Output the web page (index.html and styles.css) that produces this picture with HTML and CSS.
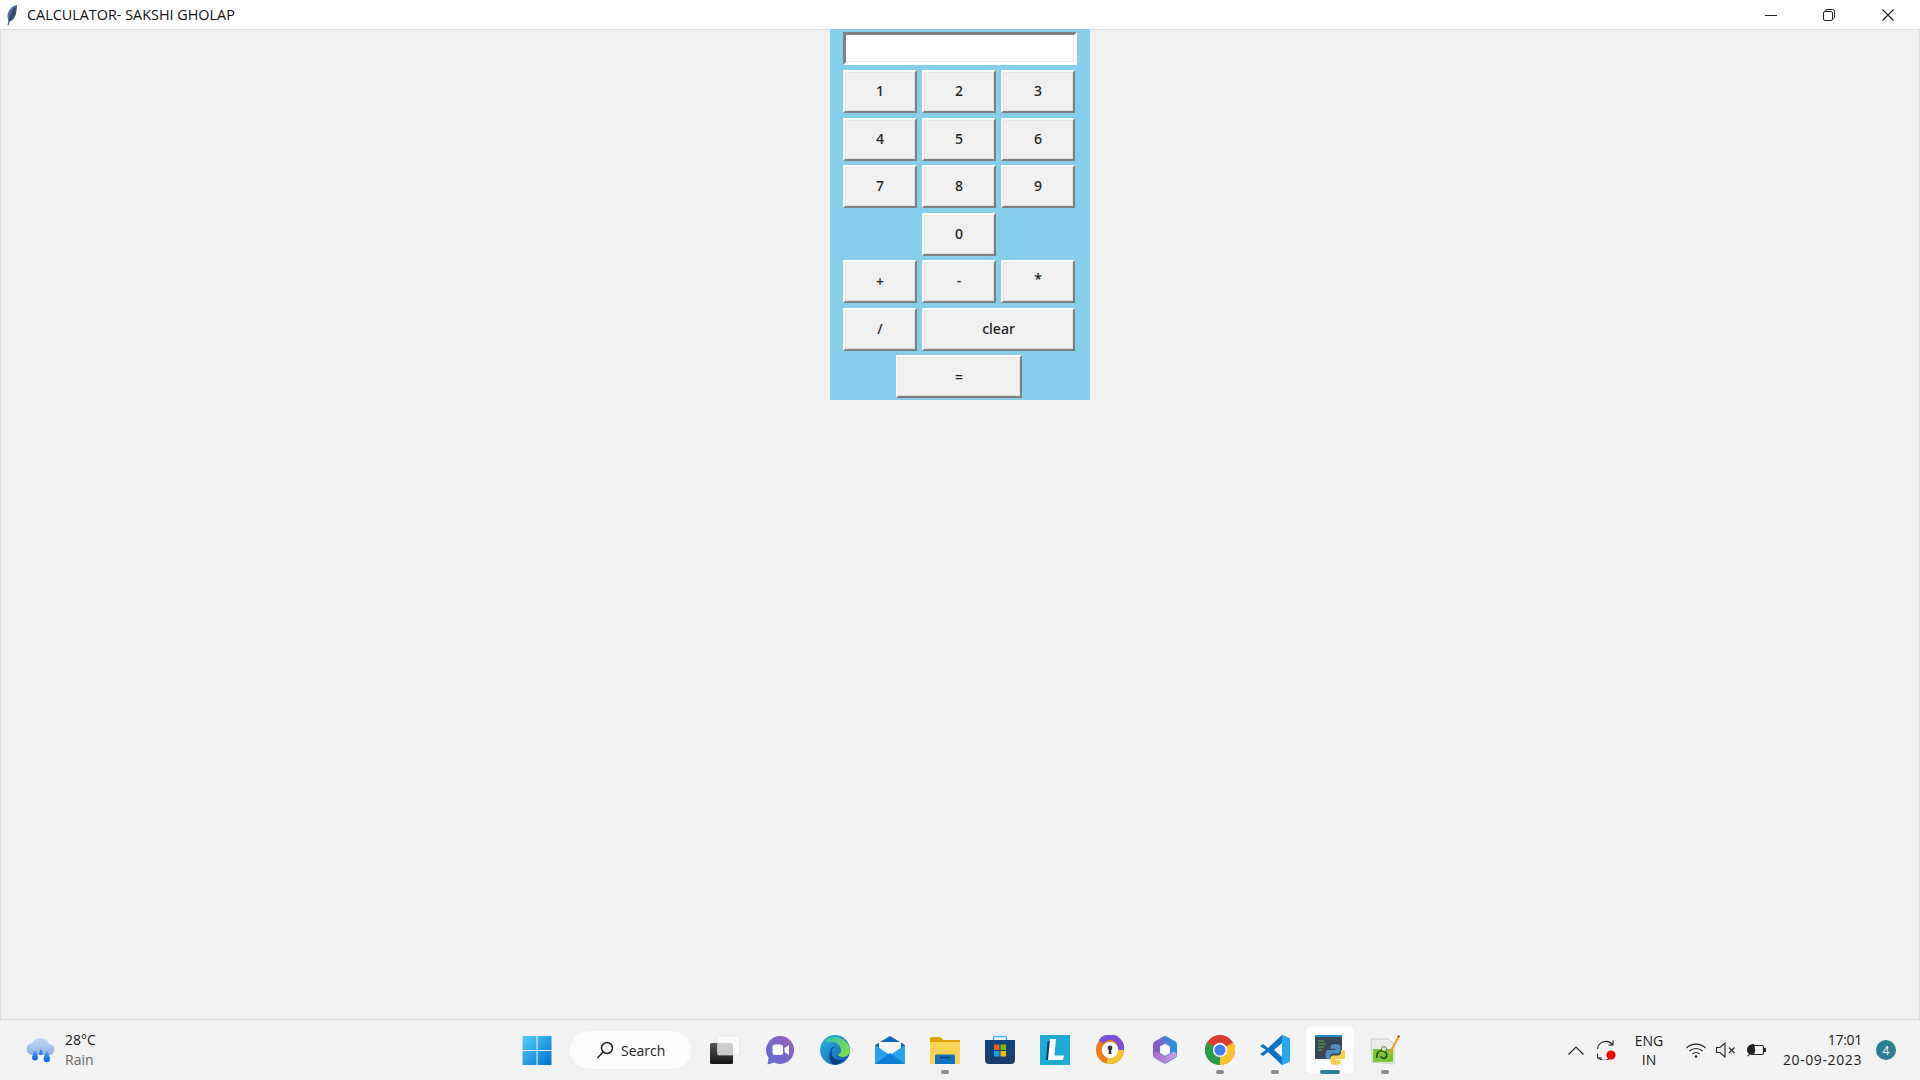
FILE: index.html
```html
<!DOCTYPE html>
<html lang="en">
<head>
    <meta charset="UTF-8">
    <title>CALCULATOR- SAKSHI GHOLAP</title>
    <link rel="stylesheet" href="styles.css">
</head>
<body>
    <header class="titlebar">
        <svg class="feather" width="12" height="22" viewBox="0 0 12 22">
            <defs><linearGradient id="fe" x1="0" y1="0" x2="1" y2="1"><stop offset="0" stop-color="#6c95c6"/><stop offset="1" stop-color="#16233f"/></linearGradient></defs>
            <path d="M11 1C6 2 2 6 1.5 11c-.2 2 .2 4 1 5.5L1.5 21l1 .5 1.2-4c3-1 5.5-4 6.300-8C10.500 6.500 11 4 11 1z" fill="url(#fe)"/>
            <path d="M9 4L3 17" stroke="#0d1526" stroke-width=".7"/>
        </svg>
        <span class="title-text">CALCULATOR- SAKSHI GHOLAP</span>
        <div class="win-controls">
            <div class="win-btn"><svg width="12" height="12" viewBox="0 0 12 12"><path d="M0 6.5h12" stroke="#222" stroke-width="1"/></svg></div>
            <div class="win-btn"><svg width="12" height="12" viewBox="0 0 12 12" fill="none" stroke="#222"><rect x=".5" y="2.5" width="9" height="9" rx="1.5"/><path d="M2.5 2.500V2A1.500 1.500 0 0 1 4 .5h5.500A2 2 0 0 1 11.500 2.500V8A1.500 1.500 0 0 1 9.500 9.500"/></svg></div>
            <div class="win-btn"><svg width="12" height="12" viewBox="0 0 12 12"><path d="M.5.5l11 11M11.5.5l-11 11" stroke="#222" stroke-width="1.1"/></svg></div>
        </div>
    </header>

    <main class="app-area">
        <div class="calc">
            <div class="entry"></div>
            <div class="keys">
                <button class="key">1</button>
                <button class="key">2</button>
                <button class="key">3</button>
                <button class="key">4</button>
                <button class="key">5</button>
                <button class="key">6</button>
                <button class="key">7</button>
                <button class="key">8</button>
                <button class="key">9</button>
                <button class="key key-zero">0</button>
                <button class="key key-plus">+</button>
                <button class="key">-</button>
                <button class="key key-star">*</button>
                <button class="key">/</button>
                <button class="key key-clear">clear</button>
                <button class="key key-equals">=</button>
            </div>
        </div>
    </main>

    <footer class="taskbar">
        <div class="weather">
            <svg width="30" height="28" viewBox="0 0 30 28">
                <defs>
                    <linearGradient id="cl" x1="0" y1="0" x2="0" y2="1"><stop offset="0" stop-color="#c5d9f5"/><stop offset="1" stop-color="#8fb2e6"/></linearGradient>
                    <linearGradient id="dr" x1="0" y1="0" x2="0" y2="1"><stop offset="0" stop-color="#4aa3ff"/><stop offset="1" stop-color="#0f62e8"/></linearGradient>
                </defs>
                <path d="M7 19a6 6 0 0 1-1-12 9 8 0 0 1 17 1 5.5 5.5 0 0 1 0 11z" fill="url(#cl)"/>
                <path d="M9 14c1.500 3 3 5 3 7.500a3 3 0 0 1-6 0C6 19 8 17 9 14z" fill="url(#dr)"/>
                <path d="M21 15c1.500 3 3 5.500 3 8a3.200 3.200 0 0 1-6.400 0c0-2.500 2-5 3.400-8z" fill="url(#dr)"/>
                <path d="M15 13c.8 2 1.600 3 1.600 4.500a1.700 1.700 0 0 1-3.400 0c0-1.500 1-2.500 1.800-4.500z" fill="#2f7ff0"/>
            </svg>
            <div class="weather-text">
                <span class="temp">28°C</span>
                <span class="cond">Rain</span>
            </div>
        </div>

        <div class="apps">
            <div class="cell">
                <svg width="30" height="30" viewBox="0 0 30 30">
                    <defs><linearGradient id="st" x1="0" y1="0" x2="1" y2="1"><stop offset="0" stop-color="#55d0fa"/><stop offset="1" stop-color="#0070cf"/></linearGradient></defs>
                    <path d="M.5 1h14v14H.5zM15.500 1h14v14h-14zM.5 16h14v14H.5zM15.500 16h14v14h-14z" fill="url(#st)"/>
                </svg>
            </div>
            <div class="search">
                <svg width="18" height="18" viewBox="0 0 18 18" fill="none" stroke="#222" stroke-width="1.5"><circle cx="11" cy="7" r="5.5"/><path d="M7 11l-5.500 6"/></svg>
                <span>Search</span>
            </div>
            <div class="cell">
                <svg width="30" height="30" viewBox="0 0 30 30">
                    <defs><linearGradient id="tv" x1="0" y1="0" x2="0" y2="1"><stop offset="0" stop-color="#555"/><stop offset="1" stop-color="#161616"/></linearGradient></defs>
                    <rect x="0" y="8" width="23" height="21" rx="1.5" fill="url(#tv)"/>
                    <rect x="7.5" y="1" width="22" height="19" rx="1.5" fill="#fff" fill-opacity=".72" stroke="#e2e2e2" stroke-width=".6"/>
                </svg>
            </div>
            <div class="cell">
                <svg width="30" height="30" viewBox="0 0 30 30">
                    <defs><linearGradient id="ch" x1="0" y1="1" x2="1" y2="0"><stop offset="0" stop-color="#5d6fd6"/><stop offset="1" stop-color="#9a5fb8"/></linearGradient></defs>
                    <path d="M15 1a14 14 0 1 1-6 26.600L2.500 29.500 3.600 23A14 14 0 0 1 15 1z" fill="url(#ch)"/>
                    <rect x="7.5" y="9.5" width="10.5" height="10.5" rx="2.5" fill="#fff"/>
                    <path d="M19.5 13l4.500-3v10l-4.500-3z" fill="#fff"/>
                </svg>
            </div>
            <div class="cell">
                <svg width="30" height="30" viewBox="0 0 30 30">
                    <defs>
                        <linearGradient id="e1" x1="0" y1="0" x2="1" y2="1"><stop offset="0" stop-color="#2fb9e6"/><stop offset="1" stop-color="#0b55a8"/></linearGradient>
                        <linearGradient id="e2" x1="0" y1="0" x2="1" y2=".7"><stop offset="0" stop-color="#31c3b0"/><stop offset="1" stop-color="#7ee04f"/></linearGradient>
                    </defs>
                    <circle cx="15" cy="15" r="15" fill="url(#e1)"/>
                    <path d="M5 6A15 15 0 0 1 30 15c0 4-3 7-7 7-3 0-5-1-5-2.500 2-1 3-2.500 3-4.500 0-4-4-8-9-8-3 0-6 1-7-1z" fill="url(#e2)"/>
                    <path d="M11 15c0-2 2-4 5-3-4 0-6 5-3.500 9.500 2 3 6.500 4.500 11.500 3A15 15 0 0 1 15 30C8 28 9 18 11 15z" fill="#0d3f88"/>
                </svg>
            </div>
            <div class="cell">
                <svg width="30" height="30" viewBox="0 0 30 30">
                    <path d="M15 1L30 10v3H0v-3z" fill="#0f67b8"/>
                    <path d="M4 7h22v14H4z" fill="#f4f4f4"/>
                    <path d="M0 10l15 10 15-10v19H0z" fill="#2aa3ea"/>
                    <path d="M0 29l15-11 15 11z" fill="#0f7fd2"/>
                </svg>
            </div>
            <div class="cell">
                <svg width="30" height="30" viewBox="0 0 30 30">
                    <path d="M0 3.500A1.500 1.500 0 0 1 1.500 2h9l3 3H29a1 1 0 0 1 1 1v4H0z" fill="#e0a106"/>
                    <path d="M0 7h30v21a1 1 0 0 1-1 1H1a1 1 0 0 1-1-1z" fill="#fcd354"/>
                    <path d="M5 29v-8a1.500 1.500 0 0 1 1.500-1.500h17A1.500 1.500 0 0 1 25 21v8z" fill="#0f72c4"/>
                    <path d="M10 22.500h10" stroke="#063b73" stroke-width="1.4"/>
                </svg>
                <i class="dot"></i>
            </div>
            <div class="cell">
                <svg width="30" height="30" viewBox="0 0 30 30">
                    <defs><linearGradient id="sb" x1="0" y1="0" x2="0" y2="1"><stop offset="0" stop-color="#11457e"/><stop offset="1" stop-color="#1c3a66"/></linearGradient></defs>
                    <path d="M8.5 5V2.500a1 1 0 0 1 1-1h11a1 1 0 0 1 1 1V5" fill="none" stroke="#35b8f2" stroke-width="1.4"/>
                    <path d="M0 5h30v20a4 4 0 0 1-4 4H4a4 4 0 0 1-4-4z" fill="url(#sb)"/>
                    <rect x="9" y="9.5" width="5.5" height="5.5" fill="#f05a28"/>
                    <rect x="15.5" y="9.5" width="5.5" height="5.5" fill="#7fba00"/>
                    <rect x="9" y="16" width="5.5" height="5.5" fill="#0aa4ef"/>
                    <rect x="15.5" y="16" width="5.5" height="5.5" fill="#ffb900"/>
                </svg>
            </div>
            <div class="cell">
                <svg width="30" height="30" viewBox="0 0 30 30">
                    <rect width="30" height="30" fill="#1fabd8"/>
                    <path d="M7.500 6L6 25h4l2-19z" fill="#0b3b82"/>
                    <path d="M10 4h6l-1.500 16.500H24L23 25H8z" fill="#fff"/>
                </svg>
            </div>
            <div class="cell">
                <svg width="30" height="30" viewBox="0 0 30 30">
                    <circle cx="15" cy="15" r="11" fill="none" stroke="#f07a16" stroke-width="6"/>
                    <path d="M6 7A11 11 0 0 1 26 15" fill="none" stroke="#7a52d8" stroke-width="6"/>
                    <path d="M26 15A11 11 0 0 1 12 25.500" fill="none" stroke="#f3c633" stroke-width="6"/>
                    <circle cx="15" cy="15" r="8" fill="#fff"/>
                    <circle cx="15" cy="13" r="2.4" fill="#2a3440"/>
                    <path d="M14 14h2l.5 5h-3z" fill="#2a3440"/>
                </svg>
            </div>
            <div class="cell">
                <svg width="30" height="30" viewBox="0 0 30 30" fill="none">
                    <defs>
                        <linearGradient id="m1" x1="0" y1="0" x2="1" y2="0"><stop offset="0" stop-color="#8a5cc8"/><stop offset="1" stop-color="#2b8fe0"/></linearGradient>
                        <linearGradient id="m2" x1="0" y1="0" x2="1" y2="0"><stop offset="0" stop-color="#b06fd0"/><stop offset="1" stop-color="#c39be6"/></linearGradient>
                    </defs>
                    <path d="M15 4.500l8.500 5v10.500L15 25l-8.500-5V9.500z" stroke="url(#m1)" stroke-width="7" stroke-linejoin="round"/>
                    <path d="M6.500 20L15 25l8.500-5" stroke="url(#m2)" stroke-width="6" stroke-linejoin="round" stroke-linecap="round"/>
                    <circle cx="15" cy="15" r="4" fill="#fff"/>
                </svg>
            </div>
            <div class="cell">
                <svg width="30" height="30" viewBox="0 0 30 30">
                    <circle cx="15" cy="15" r="15" fill="#db3b30"/>
                    <path d="M15 15L28 7.500A15 15 0 0 1 15 30z" fill="#f9c32d"/>
                    <path d="M15 15L15 30A15 15 0 0 1 2 7.500z" fill="#2a9b47"/>
                    <circle cx="15" cy="15" r="7.2" fill="#fff"/>
                    <circle cx="15" cy="15" r="5.6" fill="#3d7ff0"/>
                </svg>
                <i class="dot"></i>
            </div>
            <div class="cell">
                <svg width="30" height="30" viewBox="0 0 30 30">
                    <path d="M22 0l8 3.500v23L22 30 8 17l-5 4-3-2 6-4-6-4 3-2 5 4z" fill="#0a75c7"/>
                    <path d="M22 0l8 3.500v23L22 30z" fill="#25a8f0"/>
                    <path d="M22 8l-8 7 8 7z" fill="#fff"/>
                </svg>
                <i class="dot"></i>
            </div>
            <div class="cell cell-active">
                <span class="active-bg"></span>
                <svg class="active-icon" width="30" height="30" viewBox="0 0 30 30">
                    <rect x="0" y="0" width="27" height="24" fill="#3a4652"/>
                    <rect x="0" y="0" width="27" height="2" fill="#1f8ecb"/>
                    <path d="M3 6h6M3 9h8M3 12h6M3 15h4" stroke="#4fb65a" stroke-width="1"/>
                    <path d="M20.500 9c-3.500 0-5 1-5 2.800V14h5v1h-7c-2 0-3 1.500-3 4.500s1 4.500 2.500 4.500H15v-2.500c0-2 1.500-3 3-3h5c1.500 0 2.500-1 2.500-2.500v-3.700C25.500 10 24 9 20.500 9z" fill="#4b8fc4"/>
                    <path d="M20.500 9c-3.500 0-5 1-5 2.800V14h5v1h-7c-2 0-3 1.500-3 4.500s1 4.500 2.500 4.500H15v-2.500c0-2 1.500-3 3-3h5c1.500 0 2.500-1 2.500-2.500v-3.700C25.500 10 24 9 20.500 9z" fill="#f6d04d" transform="rotate(180 20.500 19.500)"/>
                </svg>
                <i class="bar"></i>
            </div>
            <div class="cell">
                <svg width="30" height="30" viewBox="0 0 30 30">
                    <path d="M1 4h17l6 5v20l-22-2z" fill="#ecece8" stroke="#b7b7b2" stroke-width=".6"/>
                    <path d="M3 14h20v13H3z" fill="#7cc634"/>
                    <path d="M7 23c-1-5 2-8 6-7s5 5 2 7c-2 1-4 0-4-2" fill="none" stroke="#204d13" stroke-width="1.6"/>
                    <circle cx="14" cy="14" r="2.5" fill="#d9efc0" stroke="#204d13" stroke-width=".7"/>
                    <path d="M28.500 0l1.500 1-9 17-2.500 2 .5-3z" fill="#e99a2c"/>
                    <path d="M28.500 0l1.500 1-1 2-1.700-1z" fill="#c74b3a"/>
                </svg>
                <i class="dot"></i>
            </div>
        </div>

        <div class="tray">
            <svg class="caret" width="16" height="9" viewBox="0 0 16 9"><path d="M.5 8.500L8 1l7.500 7.500" fill="none" stroke="#222" stroke-width="1.2"/></svg>
            <svg class="sync" width="20" height="20" viewBox="0 0 20 20" fill="none" stroke="#222" stroke-width="1.1">
                <path d="M1.500 9A8.500 8.500 0 0 1 16.500 4.500M17 .5V5h-4.500"/>
                <path d="M1.500 13.500V18H6M2 17.500a8.500 8.500 0 0 0 11 1.500"/>
                <circle cx="15" cy="15" r="4.6" fill="#f00000" stroke="none"/>
            </svg>
            <div class="lang"><span>ENG</span><span>IN</span></div>
            <svg class="wifi" width="20" height="15" viewBox="0 0 20 15" fill="none" stroke="#222" stroke-width="1.1">
                <path d="M.5 5a13.500 13.500 0 0 1 19 0M3.500 8a9.500 9.500 0 0 1 13 0M6.500 11a5 5 0 0 1 7 0"/>
                <circle cx="10" cy="13.5" r="1.3" fill="#222" stroke="none"/>
            </svg>
            <svg class="speaker" width="20" height="16" viewBox="0 0 20 16" fill="none" stroke="#222" stroke-width="1.1">
                <path d="M.5 5.500v5h3.500l5 4.500V1L4 5.500z"/>
                <path d="M13 5.500l5.500 5.500M18.500 5.500L13 11"/>
            </svg>
            <svg class="battery" width="20" height="14" viewBox="0 0 20 14">
                <rect x="5.5" y="2.5" width="12" height="9" rx="1.5" fill="none" stroke="#222" stroke-width="1.1"/>
                <rect x="18" y="5" width="2" height="4" fill="#222"/>
                <path d="M8 1C4 1 1 3 1 7c0 2 1 3 2 4l-2 2 .6.600L4 11.500c3 1 6-1 5-6z" fill="#222"/>
            </svg>
            <div class="clock"><span class="time">17:01</span><span class="date">20-09-2023</span></div>
            <div class="badge">4</div>
        </div>
    </footer>
</body>
</html>
```

FILE: styles.css
```css
* {
    box-sizing: border-box;
}
html, body {
    height: 100%;
}
body {
    margin: 0;
    height: 1080px;
    overflow: hidden;
    display: flex;
    flex-direction: column;
    font-family: "Open Sans", "Noto Sans", sans-serif;
    color: #1b1b1b;
    background: #f0f0f0;
}
.titlebar {
    height: 29px;
    flex: none;
    background: #fff;
    display: flex;
    align-items: center;
}
.feather {
    margin-left: 6px;
    flex: none;
}
.title-text {
    margin-left: 9px;
    font-size: 14.4px;
    color: #111;
}
.win-controls {
    margin-left: auto;
    padding-right: 3px;
    display: flex;
}
.win-btn {
    width: 58.5px;
    height: 29px;
    display: flex;
    align-items: center;
    justify-content: center;
}
.app-area {
    flex: 1;
    background: #f0f0f0;
    border: 1px solid #dcdcdc;
    display: flex;
    justify-content: center;
    align-items: flex-start;
}
.calc {
    width: 260px;
    height: 371px;
    margin-top: -1px;
    background: #87ceeb;
    padding: 3px 0 0 13px;
}
.entry {
    width: 234px;
    height: 33px;
    margin-bottom: 5px;
    background: #fff;
    border: 3px solid;
    border-color: #808080 #fff #fff #808080;
    box-shadow: inset -1px -1px 0 #e6e6e6;
}
.keys {
    display: grid;
    grid-template-columns: 74px 74px 74px;
    grid-auto-rows: 43px;
    column-gap: 5px;
    row-gap: 4.5px;
}
.key {
    font-family: "Noto Sans", sans-serif;
    font-weight: 500;
    font-size: 14px;
    color: #222;
    background: #f0f0f0;
    border: 2px solid;
    border-color: #fff #7f7f7f #7f7f7f #fff;
    box-shadow: inset -1px -1px 0 #e0e0e0, inset 1px 1px 0 #e6e6e6;
    padding: 0 0 2px;
}
.key-zero {
    grid-column: 2;
}
.key-plus {
    grid-column: 1;
    padding-bottom: 0;
}
.key-star {
    padding-bottom: 7px;
}
.key-clear {
    grid-column: 2 / 4;
}
.key-equals {
    grid-column: 1 / 4;
    justify-self: center;
    width: 126px;
    padding-bottom: 0;
}
.taskbar {
    height: 60px;
    flex: none;
    background: #f3f3f3;
    display: flex;
    align-items: center;
}
.weather {
    width: 509px;
    flex: none;
    display: flex;
    align-items: center;
    padding-left: 26px;
}
.weather-text {
    margin-left: 9px;
    display: flex;
    flex-direction: column;
    font-size: 14px;
    line-height: 20px;
}
.temp {
    color: #1b1b1b;
}
.cond {
    color: #666;
}
.apps {
    display: flex;
    align-items: center;
}
.cell {
    position: relative;
    width: 55px;
    height: 60px;
    flex: none;
    display: flex;
    align-items: center;
    justify-content: center;
}
.dot {
    position: absolute;
    left: 23.5px;
    top: 50px;
    width: 8px;
    height: 4px;
    border-radius: 2px;
    background: #8b8b8b;
}
.active-bg {
    position: absolute;
    left: 3.5px;
    top: 6px;
    width: 48px;
    height: 48px;
    border-radius: 4px;
    background: #fbfbfb;
    box-shadow: 0 0 1px rgba(0, 0, 0, 0.18);
}
.active-icon {
    position: relative;
}
.bar {
    position: absolute;
    left: 17.5px;
    top: 50px;
    width: 20px;
    height: 4px;
    border-radius: 2px;
    background: #2a7f92;
}
.search {
    width: 123px;
    height: 38px;
    margin: 0 5.5px 0 5px;
    flex: none;
    border-radius: 19px;
    background: #fbfbfb;
    box-shadow: 0 0 1px rgba(0, 0, 0, 0.12);
    display: flex;
    align-items: center;
    padding-left: 27px;
    gap: 7px;
    font-size: 14px;
    color: #222;
}
.tray {
    margin-left: auto;
    padding-right: 24px;
    display: flex;
    align-items: center;
    font-size: 14px;
    color: #1b1b1b;
}
.sync {
    margin-left: 12px;
}
.lang {
    width: 40px;
    margin-left: 13px;
    display: flex;
    flex-direction: column;
    align-items: center;
    line-height: 19px;
}
.wifi {
    margin-left: 17px;
}
.speaker {
    margin-left: 10px;
}
.battery {
    margin-left: 10px;
}
.clock {
    width: 78px;
    margin-left: 18px;
    display: flex;
    flex-direction: column;
    align-items: flex-end;
    line-height: 20px;
    white-space: nowrap;
}
.time {
    letter-spacing: -0.3px;
}
.date {
    letter-spacing: 0.6px;
}
.badge {
    width: 20px;
    height: 20px;
    margin-left: 14px;
    border-radius: 50%;
    background: #2a7f92;
    color: #fff;
    font-size: 12px;
    display: flex;
    align-items: center;
    justify-content: center;
}
```
